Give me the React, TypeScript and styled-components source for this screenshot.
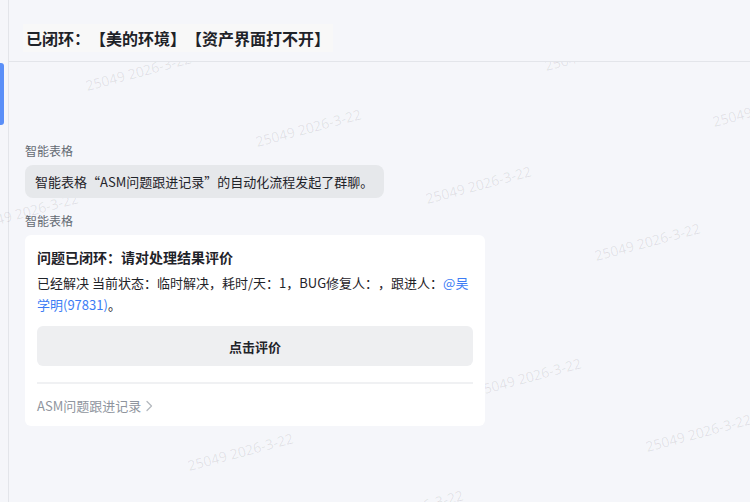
import React from 'react';
import styled, { createGlobalStyle } from 'styled-components';

const GlobalStyle = createGlobalStyle`
  html, body {
    margin: 0;
    padding: 0;
    background: #f5f6fa;
  }
  body {
    font-family: "Noto Sans CJK SC", "Noto Sans", sans-serif;
    color: #1f2329;
    text-spacing-trim: space-all;
  }
`;

const Shell = styled.div`
  position: relative;
  display: flex;
  width: 750px;
  height: 502px;
  overflow: hidden;
  background: #f5f6fa;
`;

const SideRail = styled.div`
  width: 8px;
  flex-shrink: 0;
  border-right: 1px solid #e3e5ea;
  padding-top: 63px;
  box-sizing: content-box;
`;

const ActiveMark = styled.div`
  width: 4px;
  height: 62px;
  background: #5a8ff8;
  border-radius: 0 3px 3px 0;
`;

const Main = styled.div`
  flex: 1;
  display: flex;
  flex-direction: column;
  min-width: 0;
`;

const Header = styled.div`
  position: relative;
  z-index: 2;
  height: 62px;
  flex-shrink: 0;
  display: flex;
  align-items: center;
  padding: 14px 0 0 14px;
  box-sizing: border-box;
  background: #f5f6fa;
  border-bottom: 1px solid #e3e5ea;
`;

const Title = styled.h1`
  margin: 0;
  padding: 4px 3px;
  font-size: 16px;
  font-weight: 700;
  line-height: 20px;
  color: #1f2329;
  background: #f8f8f8;
`;

const Feed = styled.div`
  position: relative;
  z-index: 1;
  display: flex;
  flex-direction: column;
  align-items: flex-start;
  padding: 80px 0 0 16px;
`;

const Sender = styled.div<{ $gap?: number }>`
  font-size: 12px;
  line-height: 18px;
  color: #646a73;
  margin-top: ${p => p.$gap ?? 0}px;
  margin-bottom: 5px;
`;

const SystemBubble = styled.div`
  background: #e6e8eb;
  border-radius: 8px;
  padding: 7px 11px 6px 10px;
  font-size: 13px;
  line-height: 20px;
  color: #1f2329;
`;

const Card = styled.div`
  width: 460px;
  box-sizing: border-box;
  background: #ffffff;
  border-radius: 6px;
  padding: 12px 12px 10px;
  display: flex;
  flex-direction: column;
`;

const CardTitle = styled.div`
  font-size: 14px;
  font-weight: 700;
  line-height: 20px;
  color: #1f2329;
`;

const CardText = styled.div`
  margin-top: 5px;
  font-size: 13px;
  line-height: 22px;
  color: #1f2329;
`;

const Mention = styled.span`
  color: #3c7cf5;
`;

const ActionButton = styled.button`
  margin-top: 10px;
  height: 40px;
  border: none;
  border-radius: 6px;
  background: #eeeff1;
  font-family: inherit;
  font-size: 13px;
  font-weight: 700;
  color: #1f2329;
  cursor: pointer;
`;

const Divider = styled.div`
  margin-top: 16px;
  height: 2px;
  background: #f0f1f3;
`;

const SourceLink = styled.div`
  margin-top: 12px;
  display: flex;
  align-items: center;
  gap: 4px;
  font-size: 13px;
  line-height: 20px;
  color: #8f959e;
`;

const WatermarkLayer = styled.div`
  position: absolute;
  inset: 0;
  z-index: 0;
  pointer-events: none;
`;

const Watermark = styled.span`
  position: absolute;
  white-space: nowrap;
  font-family: "Open Sans", "Noto Sans", sans-serif;
  font-size: 14px;
  line-height: 16px;
  color: rgba(0, 0, 0, 0.09);
  transform: rotate(-15deg);
  transform-origin: 0 100%;
`;

const marks: [number, number][] = [
  [88, 92], [258, 148], [428, 205], [597, 262],
  [547, 72], [715, 128],
  [-25, 232], [145, 289], [315, 345], [478, 397], [648, 453],
  [190, 472], [360, 529],
];

const Chevron = () => (
  <svg width="8" height="12" viewBox="0 0 8 12" fill="none">
    <path d="M2 1.5 L6.5 6 L2 10.5" stroke="#b5b9bf" strokeWidth="1.3" strokeLinecap="round" strokeLinejoin="round" />
  </svg>
);

export default function App() {
  return (
    <>
      <GlobalStyle />
      <Shell>
        <WatermarkLayer>
          {marks.map(([x, y], i) => (
            <Watermark key={i} style={{ left: x, top: y - 14 }}>25049 2026-3-22</Watermark>
          ))}
        </WatermarkLayer>
        <SideRail>
          <ActiveMark />
        </SideRail>
        <Main>
          <Header>
            <Title>已闭环：【美的环境】【资产界面打不开】</Title>
          </Header>
          <Feed>
            <Sender>智能表格</Sender>
            <SystemBubble>智能表格“ASM问题跟进记录”的自动化流程发起了群聊。</SystemBubble>
            <Sender $gap={14}>智能表格</Sender>
            <Card>
              <CardTitle>问题已闭环：请对处理结果评价</CardTitle>
              <CardText>
                已经解决 当前状态：临时解决，耗时/天：1，BUG修复人：，跟进人：<Mention>@吴学明(97831)</Mention>。
              </CardText>
              <ActionButton>点击评价</ActionButton>
              <Divider />
              <SourceLink>
                ASM问题跟进记录
                <Chevron />
              </SourceLink>
            </Card>
          </Feed>
        </Main>
      </Shell>
    </>
  );
}
